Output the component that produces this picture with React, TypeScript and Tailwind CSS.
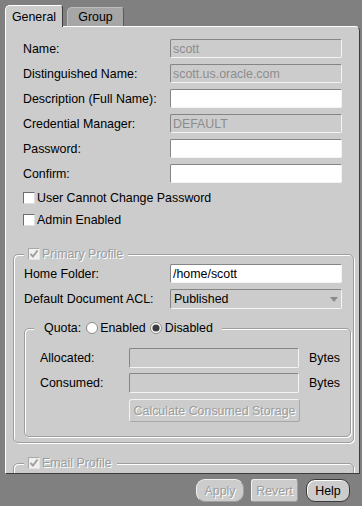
import React from 'react';

const DIS = 'text-[#9c9c9c] [text-shadow:1px_1px_0_#ffffff]';
const ETCH = 'border border-[#9e9e9e] rounded-[5px] shadow-[1px_1px_0_#ffffff,inset_1px_1px_0_#ffffff]';

const Check = ({ checked = false, disabled = false }: { checked?: boolean; disabled?: boolean }) => (
  <span
    className={`w-[12px] h-[12px] shrink-0 flex items-center justify-center border ${
      disabled
        ? 'bg-[#f0f0f0] border-[#a8a8a8] border-r-[#e4e4e4] border-b-[#e4e4e4]'
        : 'bg-white border-[#6e6e6e] border-r-[#dedede] border-b-[#dedede]'
    }`}
  >
    {checked && (
      <svg width="10" height="10" viewBox="0 0 10 10">
        <path d="M1.5 5 L4 7.5 L8.5 1.5" fill="none" stroke={disabled ? '#a0a0a0' : '#333'} strokeWidth="2" />
      </svg>
    )}
  </span>
);

const Radio = ({ on = false }: { on?: boolean }) => (
  <svg width="12" height="12" viewBox="0 0 12 12" className="shrink-0">
    <circle cx="6" cy="6" r="5.5" fill="#ffffff" stroke="#8a8a8a" />
    {on && <circle cx="6" cy="6" r="3.6" fill="#3c3c3c" />}
  </svg>
);

const Field = ({ value = '', disabled = false, w = 'w-[172px]', h = 'h-[19px]' }: { value?: string; disabled?: boolean; w?: string; h?: string }) => (
  <div
    className={`${w} ${h} shrink-0 rounded-[2px] border border-[#858585] border-r-[#f4f4f4] border-b-[#f4f4f4] flex items-center pl-[2px] ${
      disabled ? 'bg-[#cccccc] text-[#8c8c8c]' : 'bg-white text-black'
    }`}
  >
    {value}
  </div>
);

const Row = ({ label, children, lw = 'w-[147px]' }: { label: string; children: React.ReactNode; lw?: string }) => (
  <div className="flex items-center">
    <span className={`${lw} shrink-0 whitespace-nowrap`}>{label}</span>
    {children}
  </div>
);

export default function App() {
  return (
    <div className="w-[362px] h-[506px] bg-[#808080] pt-[5px] pl-[5px] font-['Liberation_Sans',Arial,sans-serif] text-[12.4px] leading-[14px] text-black overflow-hidden">
      {/* tabs */}
      <div className="flex items-end h-[21px]">
        <div className="relative z-10 -mb-px w-[58px] h-[22px] bg-[#cccccc] border-l border-t border-white border-r border-r-[#3c3c3c] rounded-tl-[5px] rounded-tr-[3px] flex items-center justify-center">
          General
        </div>
        <div className="ml-[4px] w-[57px] h-[19px] bg-[#a6a6a6] border-l border-t border-[#bdbdbd] border-r border-r-[#5a5a5a] rounded-tl-[5px] rounded-tr-[3px] flex items-center justify-center">
          Group
        </div>
      </div>

      {/* panel */}
      <div className="w-[355px] h-[448px] bg-[#cccccc] border border-white border-r-[#3c3c3c] border-b-[#3c3c3c] rounded-tr-[5px] overflow-hidden flex flex-col">
        <div className="shrink-0 pl-[17px] pt-[12px] flex flex-col gap-[6px]">
          <Row label="Name:"><Field value="scott" disabled /></Row>
          <Row label="Distinguished Name:"><Field value="scott.us.oracle.com" disabled /></Row>
          <Row label="Description (Full Name):"><Field /></Row>
          <Row label="Credential Manager:"><Field value="DEFAULT" disabled /></Row>
          <Row label="Password:"><Field /></Row>
          <Row label="Confirm:"><Field /></Row>
        </div>
        <div className="shrink-0 pl-[17px] mt-[7px] flex flex-col gap-[6px]">
          <label className="h-[16px] flex items-center gap-[2px]"><Check />User Cannot Change Password</label>
          <label className="h-[16px] flex items-center gap-[2px]"><Check />Admin Enabled</label>
        </div>

        {/* primary profile */}
        <fieldset className={`shrink-0 ml-[7px] mt-[19px] w-[341px] pl-[10px] pr-[2px] pb-[5px] ${ETCH}`}>
          <legend className="h-[14px] pl-[4px] pr-[5px] bg-[#cccccc] flex items-center gap-[2px]">
            <Check checked disabled />
            <span className={DIS}>Primary Profile</span>
          </legend>
          <div className="mt-[3px] flex flex-col gap-[6px]">
            <Row label="Home Folder:" lw="w-[146px]"><Field value="/home/scott" /></Row>
            <Row label="Default Document ACL:" lw="w-[146px]">
              <div className="w-[172px] h-[20px] rounded-[2px] border border-[#858585] border-r-[#f4f4f4] border-b-[#f4f4f4] flex items-center justify-between pl-[3px] pr-[3px] bg-[#cccccc]">
                Published
                <svg width="8" height="5" viewBox="0 0 8 5"><path d="M0 0 H8 L4 5 Z" fill="#8a8a8a" /></svg>
              </div>
            </Row>
          </div>

          {/* quota */}
          <fieldset className={`mt-[12px] pl-[15px] pb-[14px] ${ETCH}`}>
            <legend className="-ml-[6px] h-[14px] pl-[10px] pr-[9px] bg-[#cccccc] flex items-center">
              <span className="mr-[5px]">Quota:</span>
              <Radio />
              <span className="ml-[2px] mr-[4px]">Enabled</span>
              <Radio on />
              <span className="ml-[3px]">Disabled</span>
            </legend>
            <div className="mt-[13px] flex flex-col gap-[5px]">
              <Row label="Allocated:" lw="w-[89px]">
                <Field disabled w="w-[170px]" h="h-[20px]" />
                <span className="ml-[10px]">Bytes</span>
              </Row>
              <Row label="Consumed:" lw="w-[89px]">
                <Field disabled w="w-[170px]" h="h-[20px]" />
                <span className="ml-[10px]">Bytes</span>
              </Row>
              <div className="pl-[89px] mt-px">
                <button className={`w-[171px] h-[23px] rounded-[3px] border border-[#f2f2f2] border-r-[#a8a8a8] border-b-[#a8a8a8] bg-[#cccccc] whitespace-nowrap ${DIS}`}>
                  Calculate Consumed Storage
                </button>
              </div>
            </div>
          </fieldset>
        </fieldset>

        {/* email profile */}
        <fieldset className={`shrink-0 ml-[7px] mt-[13px] w-[341px] h-[40px] pl-[10px] ${ETCH}`}>
          <legend className="h-[14px] pl-[4px] pr-[5px] bg-[#cccccc] flex items-center gap-[2px]">
            <Check checked disabled />
            <span className={DIS}>Email Profile</span>
          </legend>
        </fieldset>
      </div>

      {/* buttons */}
      <div className="mt-[5px] flex justify-end gap-[7px] pr-[12px] -ml-[5px]">
        <button className={`w-[48px] h-[23px] rounded-[9px] border border-[#f0f0f0] border-r-[#a0a0a0] border-b-[#a0a0a0] bg-[#cccccc] ${DIS}`}>Apply</button>
        <button className={`w-[47px] h-[23px] rounded-[3px] border border-[#f0f0f0] border-r-[#a0a0a0] border-b-[#a0a0a0] bg-[#cccccc] ${DIS}`}>Revert</button>
        <button className="ml-px w-[44px] h-[23px] rounded-[9px] border border-[#3a3a3a] bg-[#cccccc] shadow-[inset_1px_1px_0_#ffffff] text-black">Help</button>
      </div>
    </div>
  );
}
